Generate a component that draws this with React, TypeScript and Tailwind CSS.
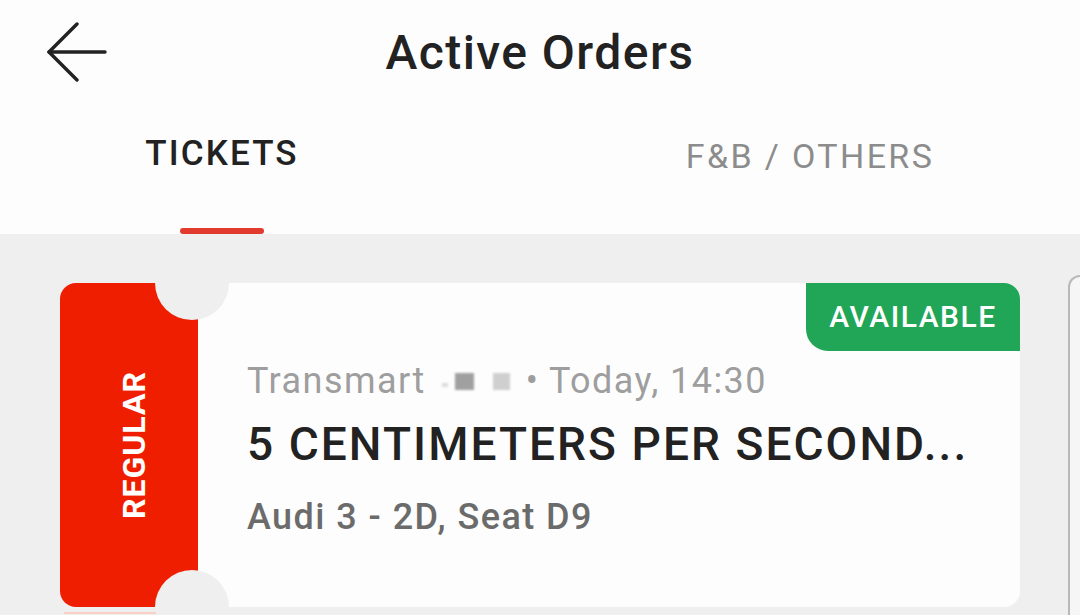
export default function App() {
  return (
    <div
      className="w-[1080px] h-[615px] overflow-hidden bg-[#efefef] flex flex-col"
      style={{ fontFamily: "Roboto, 'Noto Sans', sans-serif" }}
    >
      {/* Header */}
      <div className="bg-[#fdfdfd] h-[234px] shrink-0 flex flex-col">
        <div className="h-[105px] flex items-center">
          <div className="w-[200px] pl-[46px] flex items-center">
            <svg width="62" height="62" viewBox="0 0 62 62" fill="none" stroke="#222" strokeWidth="3.4" strokeLinecap="round" strokeLinejoin="round">
              <path d="M3 30H59" />
              <path d="M31 2L3 30L31 58" />
            </svg>
          </div>
          <h1 className="flex-1 text-center text-[48px] leading-none font-medium text-[#222] tracking-[0.03em]">
            Active Orders
          </h1>
          <div className="w-[200px]" />
        </div>
        <div className="h-[129px] grid grid-cols-2">
          <div className="pr-[96px] flex flex-col items-center justify-between">
            <span className="pt-[31px] text-[35px] leading-none font-medium text-[#222] tracking-[0.06em]">TICKETS</span>
            <div className="w-[84px] h-[6px] rounded-full bg-[#e23b2e]" />
          </div>
          <div className="flex flex-col items-center">
            <span className="pt-[34px] text-[34px] leading-none text-[#8c8c8c] tracking-[0.07em]">F&amp;B / OTHERS</span>
          </div>
        </div>
      </div>

      {/* Tickets */}
      <div className="flex gap-[48px] pl-[60px] pt-[49px]">
        <div className="flex flex-col shrink-0">
          <div className="relative w-[960px] h-[324px] flex rounded-[16px] overflow-hidden">
            <div className="w-[138px] bg-[#f01e00] flex">
              <div className="flex-1 flex items-center justify-center">
                <span className="-rotate-90 whitespace-nowrap text-[32px] leading-none font-bold text-white tracking-[0.03em]">
                  REGULAR
                </span>
              </div>
              <div className="w-[5px] flex flex-col gap-[28px] pt-[46px]">
                <div className="h-[37px] bg-[#e4e4e4]" />
                <div className="h-[37px] bg-[#e4e4e4]" />
                <div className="h-[37px] bg-[#e4e4e4]" />
                <div className="h-[37px] bg-[#e4e4e4]" />
              </div>
            </div>
            <div className="relative flex-1 bg-[#fdfdfd] flex flex-col pl-[49px] pt-[80px]">
              <div className="flex items-center text-[36px] leading-none text-[#9e9e9e] tracking-[0.04em] whitespace-nowrap">
                <span>Transmart</span>
                <span className="ml-[16px] mt-[8px] w-[6px] h-[4px] bg-[#dcdcdc] blur-[1px]" />
                <span className="ml-[7px] w-[19px] h-[17px] bg-[#a0a0a0] blur-[1px]" />
                <span className="ml-[19px] w-[17px] h-[17px] bg-[#cfcfcf] blur-[1px]" />
                <span className="ml-[16px]">• Today, 14:30</span>
              </div>
              <div className="mt-[22px] text-[46px] leading-none font-medium text-[#222] tracking-[0.045em] whitespace-nowrap">
                5 CENTIMETERS PER SECOND...
              </div>
              <div className="mt-[32px] text-[36px] leading-none font-medium text-[#6b6b6b] tracking-[0.04em]">
                Audi 3 - 2D, Seat D9
              </div>
              <div className="absolute top-0 right-0 w-[214px] h-[68px] bg-[#20a656] rounded-bl-[22px] flex items-center justify-center">
                <span className="text-[30px] leading-none font-medium text-white tracking-[0.05em]">AVAILABLE</span>
              </div>
            </div>
            <div className="absolute left-[95px] -top-[37px] w-[74px] h-[74px] rounded-full bg-[#efefef]" />
            <div className="absolute left-[95px] -bottom-[37px] w-[74px] h-[74px] rounded-full bg-[#efefef]" />
          </div>
          <div className="mt-[5px] ml-[4px] w-[92px] h-[2px] bg-[#f9cfc6]" />
        </div>
        <div className="shrink-0 w-[120px] h-[400px] -mt-[8px] rounded-tl-[12px] border-l-2 border-t-2 border-[#b9b9b9] bg-[#f6f6f6]" />
      </div>
    </div>
  );
}
